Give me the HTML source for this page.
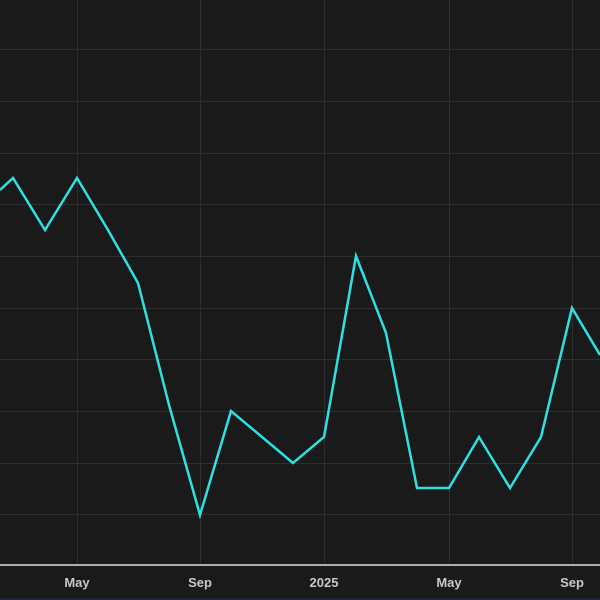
<!DOCTYPE html>
<html><head><style>
html,body{margin:0;padding:0;background:#1a1a1a;width:600px;height:600px;overflow:hidden}
</style></head><body>
<svg width="600" height="600" xmlns="http://www.w3.org/2000/svg" style="display:block">
<rect width="600" height="600" fill="#1a1a1a"/>
<g stroke="#2e2e2e" stroke-width="1">
<line x1="0" y1="49.5" x2="600" y2="49.5"/>
<line x1="0" y1="101.5" x2="600" y2="101.5"/>
<line x1="0" y1="153.5" x2="600" y2="153.5"/>
<line x1="0" y1="204.5" x2="600" y2="204.5"/>
<line x1="0" y1="256.5" x2="600" y2="256.5"/>
<line x1="0" y1="308.5" x2="600" y2="308.5"/>
<line x1="0" y1="359.5" x2="600" y2="359.5"/>
<line x1="0" y1="411.5" x2="600" y2="411.5"/>
<line x1="0" y1="463.5" x2="600" y2="463.5"/>
<line x1="0" y1="514.5" x2="600" y2="514.5"/>
<line x1="77.5" y1="0" x2="77.5" y2="565"/>
<line x1="200.5" y1="0" x2="200.5" y2="565"/>
<line x1="324.5" y1="0" x2="324.5" y2="565"/>
<line x1="449.5" y1="0" x2="449.5" y2="565"/>
<line x1="572.5" y1="0" x2="572.5" y2="565"/>
</g>
<line x1="0" y1="565" x2="600" y2="565" stroke="#b0b0b0" stroke-width="2"/>
<polyline fill="none" stroke="#2ee0e0" stroke-width="2.5" stroke-linejoin="miter"
points="0,190 13,178 45,230 77,178 108,230 138,283 169,405 200,515 231,411 262,437 293,463 324,437 356,256 386,333 417,488 449,488 479,437 510,488 541,437 572,308 600,355"/>
<g font-family="Liberation Sans, sans-serif" font-size="13" font-weight="bold" fill="#c8c8c8" text-anchor="middle">
<text x="77" y="587">May</text>
<text x="200" y="587">Sep</text>
<text x="324" y="587">2025</text>
<text x="449" y="587">May</text>
<text x="572" y="587">Sep</text>
</g>
<rect x="0" y="598" width="600" height="2" fill="#222436"/>
</svg>
</body></html>
